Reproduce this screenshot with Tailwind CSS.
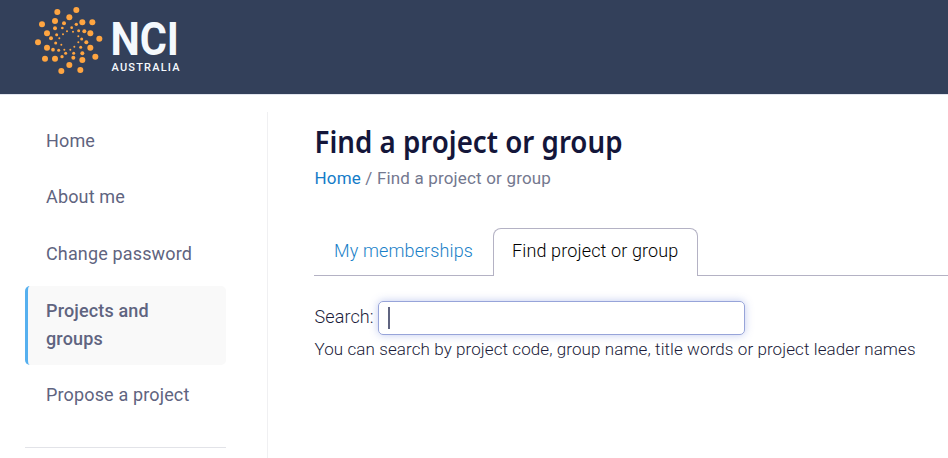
<!DOCTYPE html>
<html lang="en">
<head>
<meta charset="utf-8">
<title>Find a project or group</title>
<script src="https://cdn.jsdelivr.net/npm/@tailwindcss/browser@4"></script>
</head>
<body class="bg-white font-['Roboto',sans-serif] w-[948px] h-[458px] overflow-hidden">
<header class="h-[95px] bg-[#33405a] border-b border-[#e2e5ee] flex pl-[25px]">
  <svg class="w-[80px] h-[80px] shrink-0" viewBox="0 0 240 240" fill="#ffa541">
    <g>
      <circle cx="97" cy="36" r="9"/><circle cx="154" cy="30" r="9"/><circle cx="133" cy="52" r="9"/><circle cx="90" cy="63" r="9"/><circle cx="51" cy="73" r="9"/><circle cx="172" cy="67" r="9"/><circle cx="202" cy="67" r="9"/><circle cx="66" cy="100" r="9"/><circle cx="196" cy="100" r="9"/><circle cx="223" cy="116" r="9"/><circle cx="39" cy="127" r="9"/><circle cx="66" cy="143" r="9"/><circle cx="196" cy="143" r="9"/><circle cx="211" cy="170" r="9"/><circle cx="60" cy="176" r="9"/><circle cx="90" cy="176" r="9"/><circle cx="172" cy="180" r="9"/><circle cx="133" cy="195" r="9"/><circle cx="109" cy="213" r="9"/><circle cx="166" cy="210" r="9"/>
    </g>
    <g>
      <circle cx="117" cy="70" r="6"/><circle cx="154" cy="73" r="5"/><circle cx="90" cy="85" r="6"/><circle cx="178" cy="94" r="6"/><circle cx="78" cy="115" r="6"/><circle cx="184" cy="127" r="6"/><circle cx="84" cy="149" r="5.5"/><circle cx="172" cy="160" r="6"/><circle cx="145" cy="173" r="6"/><circle cx="111" cy="170" r="5"/>
      <circle cx="140" cy="83" r="4"/><circle cx="112" cy="84" r="4"/><circle cx="161" cy="92" r="4.5"/><circle cx="95" cy="104" r="4.5"/><circle cx="170" cy="117" r="4.5"/><circle cx="92" cy="129" r="4.5"/><circle cx="167" cy="142" r="4.5"/><circle cx="101" cy="151" r="4.5"/><circle cx="122" cy="160" r="4.5"/><circle cx="146" cy="160" r="4.5"/>
      <circle cx="126" cy="94" r="3"/><circle cx="144" cy="95" r="3"/><circle cx="114" cy="103" r="3"/><circle cx="160" cy="109" r="3"/><circle cx="103" cy="115" r="3"/><circle cx="160" cy="127" r="3"/><circle cx="109" cy="134" r="3"/><circle cx="148" cy="140" r="3"/><circle cx="118" cy="149" r="3"/><circle cx="136" cy="149" r="3"/>
    </g>
  </svg>
  <svg class="w-[84px] h-[85px] shrink-0" viewBox="-6 0 84 85" fill="#f5f9fd" font-family="Roboto, sans-serif">
    <text x="-0.6" y="55" font-size="46" font-weight="700" textLength="68.6" lengthAdjust="spacingAndGlyphs">NCI</text>
    <text x="0.5" y="71" font-size="11" font-weight="500" textLength="68">AUSTRALIA</text>
  </svg>
</header>
<div class="flex h-[363px]">
  <aside class="w-[268px] shrink-0 pl-[25px] pr-[41px] mt-[17px] border-r border-[#f0f0f2]">
    <nav class="flex flex-col text-[18px] leading-7 tracking-[0.15px] text-[#5f6480]">
      <a class="pl-[21px] pt-[15px] h-[56px]">Home</a>
      <a class="pl-[21px] pt-[15px] h-[57px]">About me</a>
      <a class="pl-[21px] pt-[15px] h-[61px]">Change password</a>
      <a class="pl-[18px] pt-[11px] h-[79px] rounded-[5px] border-l-3 border-[#56b0ef] bg-[#f9f9f9] font-medium">Projects and<br>groups</a>
      <a class="pl-[21px] pt-[16px] h-[82px]">Propose a project</a>
      <hr class="border-[#e2e3e8]">
    </nav>
  </aside>
  <main class="flex-1 pl-[46px] pt-[23px] text-[18px] font-light text-[#1b1c3a]">
    <h1 class="h-[43px] whitespace-nowrap text-[#14163a]"><svg class="w-[340px] h-[54px] -ml-[6px]" viewBox="-6 -6 340 54" fill="currentColor"><text x="0.5" y="29" font-family="Noto Sans, sans-serif" font-size="31" font-weight="570" textLength="308" lengthAdjust="spacingAndGlyphs">Find a project or group</text></svg></h1>
    <div class="h-[67px] pt-[5px] pl-[0.5px] text-[17px] leading-6 font-normal tracking-[0.17px] text-[#74788f]"><a class="text-[#147cc8]">Home</a> / Find a project or group</div>
    <div class="flex h-[48px] leading-[46px] tracking-[0.13px]">
      <a class="w-[179px] pl-5 border-b border-[#b4b2c4] text-[#1a7fc8]">My memberships</a>
      <a class="w-[205px] pl-[18px] border border-b-0 border-[#b4b2c4] rounded-t-[8px] text-black leading-[44px]">Find project or group</a>
      <span class="flex-1 border-b border-[#b4b2c4]"></span>
    </div>
    <div class="flex pt-[25px]">
      <label class="w-[64px] leading-8 pl-[0.5px] tracking-[0.1px]">Search:</label>
      <div class="w-[367px] h-[34px] rounded-[5px] border border-[#97a4d9] shadow-[0_0_8px_rgba(120,140,220,0.45)] pl-[9px] pt-[5px]"><div class="w-[2px] h-[22px] bg-[#5f6480]"></div></div>
    </div>
    <p class="text-[17px] leading-7 whitespace-nowrap pl-[0.5px] tracking-[0.09px]">You can search by project code, group name, title words or project leader names</p>
  </main>
</div>
</body>
</html>
